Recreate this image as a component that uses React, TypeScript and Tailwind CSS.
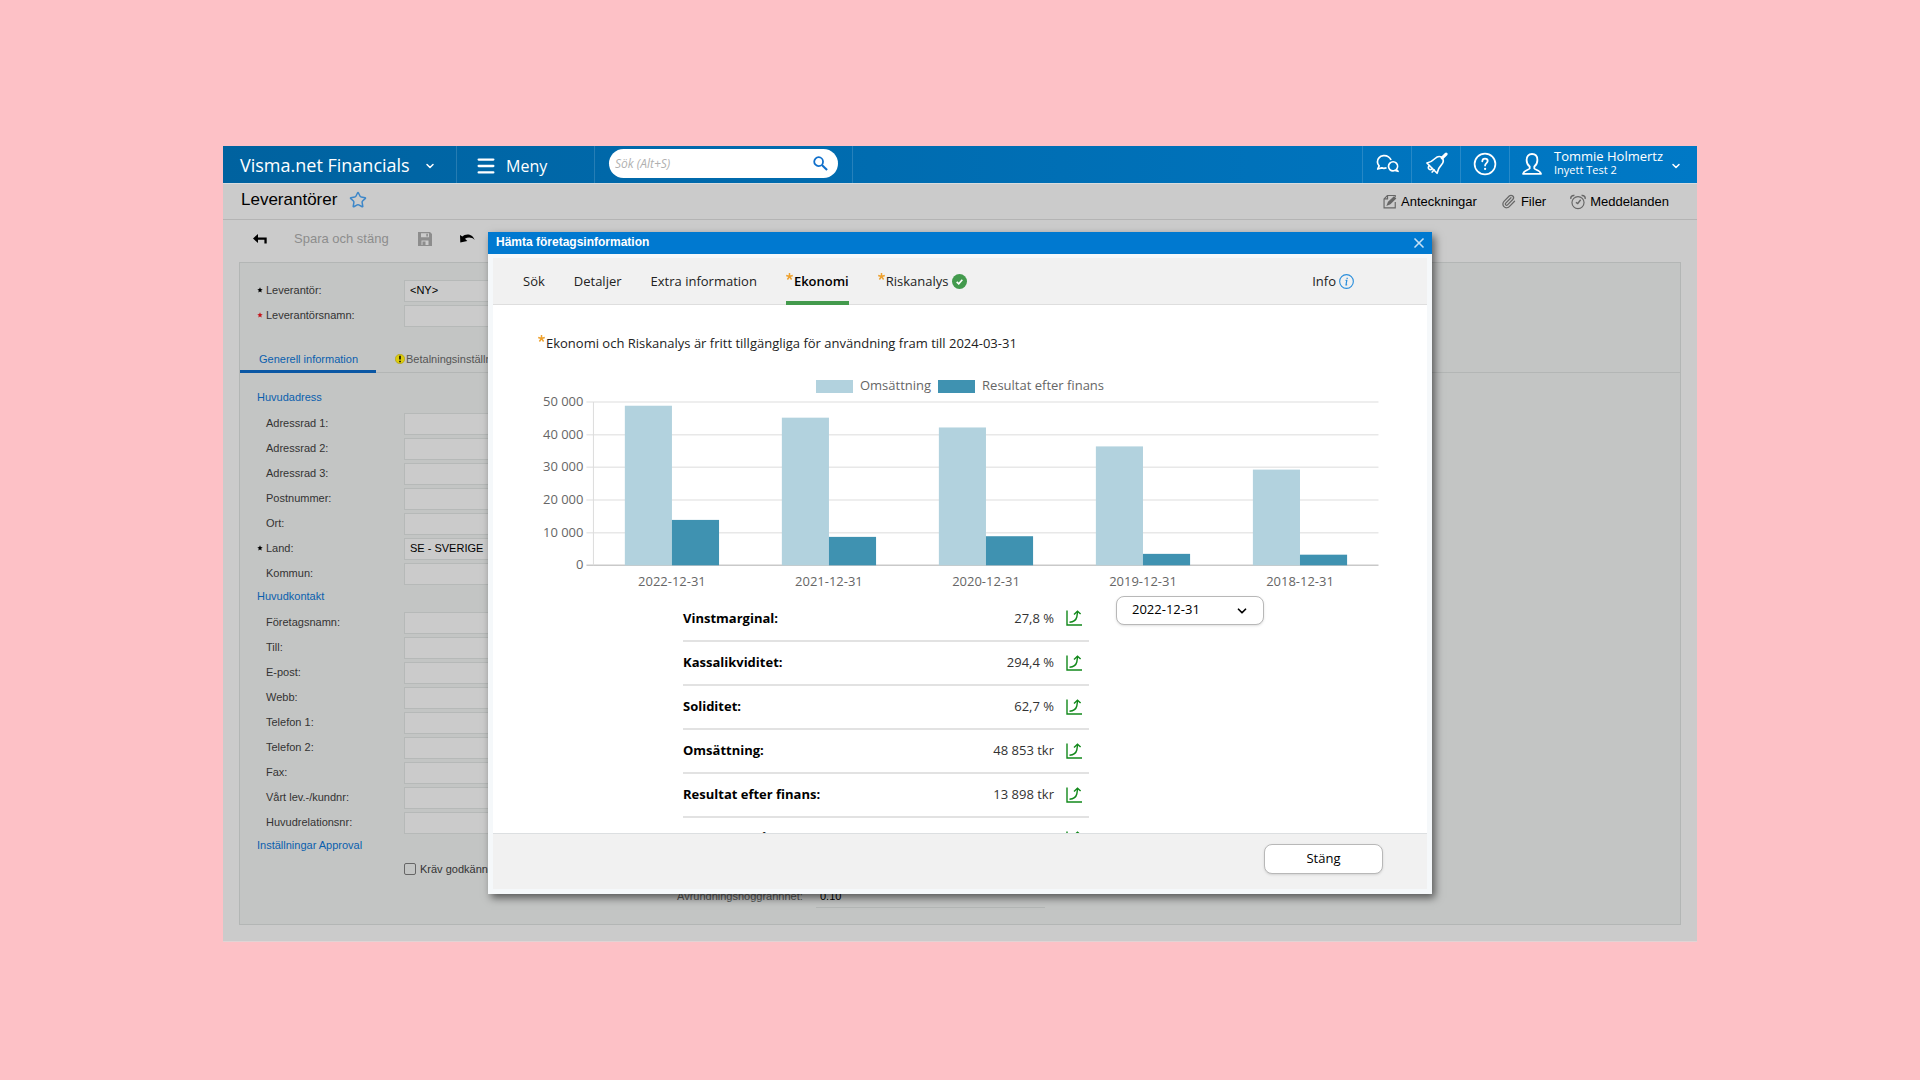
import React from 'react';
import { ChevronDown, Menu, Star, X, Paperclip } from 'lucide-react';

const CHART_DATA = [
  { date: '2022-12-31', revenue: 48853, result: 13898 },
  { date: '2021-12-31', revenue: 45200, result: 8700 },
  { date: '2020-12-31', revenue: 42200, result: 8900 },
  { date: '2019-12-31', revenue: 36400, result: 3500 },
  { date: '2018-12-31', revenue: 29300, result: 3250 },
];

const KEY_FIGURES = [
  { label: 'Vinstmarginal:', value: '27,8 %' },
  { label: 'Kassalikviditet:', value: '294,4 %' },
  { label: 'Soliditet:', value: '62,7 %' },
  { label: 'Omsättning:', value: '48 853 tkr' },
  { label: 'Resultat efter finans:', value: '13 898 tkr' },
  { label: 'Summa tillgångar:', value: '' },
];

const ADDRESS_FIELDS = [
  { id: 'adr1', label: 'Adressrad 1:' },
  { id: 'adr2', label: 'Adressrad 2:' },
  { id: 'adr3', label: 'Adressrad 3:' },
  { id: 'postnr', label: 'Postnummer:' },
  { id: 'ort', label: 'Ort:' },
  { id: 'land', label: 'Land:', value: 'SE - SVERIGE', required: 'text-black' },
  { id: 'kommun', label: 'Kommun:' },
];

const CONTACT_FIELDS = [
  { id: 'foretag', label: 'Företagsnamn:' },
  { id: 'till', label: 'Till:' },
  { id: 'epost', label: 'E-post:' },
  { id: 'webb', label: 'Webb:' },
  { id: 'tel1', label: 'Telefon 1:' },
  { id: 'tel2', label: 'Telefon 2:' },
  { id: 'fax', label: 'Fax:' },
  { id: 'levnr', label: 'Vårt lev.-/kundnr:' },
  { id: 'relnr', label: 'Huvudrelationsnr:' },
];

interface FieldProps {
  id: string;
  label: string;
  value?: string;
  required?: string;
}

const Field: React.FC<FieldProps> = ({ id, label, value = '', required }) => (
  <div className="flex h-[25px] items-start">
    <label htmlFor={id} className="flex h-5 w-[147px] items-center text-[#333]">
      <span className={`w-[9px] ${required ?? ''}`}>
        {required && (
          <svg viewBox="0 0 10 10" className="h-[6px] w-[6px] fill-current">
            <path d="M5 .5l1.300 3L9.500 4 7 6l.8 3.300L5 7.700 2.200 9.300 3 6 .5 4l3.200-.5z" />
          </svg>
        )}
      </span>
      {label}
    </label>
    <input
      id={id}
      defaultValue={value}
      className="h-[22px] w-[220px] border border-[#b6b9b8] bg-[#cbcbcb] px-[5px] pb-[2px] text-[11px] text-black outline-none"
    />
  </div>
);

const TrendIcon = () => (
  <svg viewBox="0 0 16 16" className="h-4 w-4" fill="none" stroke="#12891b" strokeWidth="1.400">
    <path d="M1 .5v14.500h15" />
    <path d="M3.500 12.300c4.300-.5 6.600-2.300 7.300-5.300.4-1.800.6-3.500.6-5.200" />
    <path d="M8 4.500l3.500-3.300L14.600 4" />
  </svg>
);

const OrangeStar = () => (
  <svg viewBox="0 0 10 10" className="mt-px h-[7px] w-[7px] shrink-0" stroke="#eea12e" strokeWidth="2.100">
    <path d="M5 5V0M5 5l4.700-1.400M5 5l3 4.300M5 5L2 9.300M5 5L.3 3.600" />
  </svg>
);

const SearchIcon = () => (
  <svg viewBox="0 0 16 16" className="h-[15px] w-[15px]" fill="none" stroke="#0f6fcb">
    <circle cx="6" cy="6" r="4.700" strokeWidth="1.900" />
    <path d="M9.500 9.500l5.500 5.500" strokeWidth="2.200" />
  </svg>
);

const ChatIcon = () => (
  <svg viewBox="0 0 24 20" className="h-[19px] w-[23px]" fill="none" stroke="currentColor" strokeWidth="1.800" strokeLinejoin="round">
    <path d="M11 14.500c-1.400.5-3.600.7-5 .1L1.700 15.800l1.500-3.300C.9 10.300.8 6.500 3 4.100 5.300 1.400 10 1 13 3c1.400.9 2.300 2 2.700 3.400" />
    <path d="M21.300 16.300c1.700-1.900 1.700-4.900 0-6.700-1.900-1.900-4.900-1.900-6.800 0-1.900 1.900-1.900 4.900 0 6.800 1.500 1.500 3.700 1.800 5.500.8l3.100 1z" />
  </svg>
);

const BellIcon = () => (
  <svg viewBox="0 0 24 24" className="h-[23px] w-[23px]" fill="none" stroke="currentColor" strokeWidth="1.700" strokeLinejoin="round" strokeLinecap="round">
    <path d="M22 2.200l-4 4" strokeWidth="3.200" />
    <path d="M17.500 5.500c-2.500-1.500-5-.7-7 1.300-2.500 2.500-5 4-8.500 4.700l10.600 10.700c.8-3.700 2-6.200 4.500-8.700 2.200-2.200 2.700-5.200.4-8z" />
    <path d="M4.500 14.200c-1.100 1.200-1.200 2.600-.4 3.500.9.900 2.400.8 3.500-.3M9.500 18.700l-2 2.200" />
  </svg>
);

const HelpIcon = () => (
  <svg viewBox="0 0 24 24" className="h-6 w-6" fill="none" stroke="currentColor" strokeWidth="1.700" strokeLinecap="round">
    <circle cx="12" cy="12" r="10.400" />
    <path d="M9.300 9.300c.1-1.700 1.200-2.600 2.700-2.600s2.700.9 2.700 2.400c0 2-2.600 2.100-2.600 4.400" strokeWidth="1.800" />
    <path d="M12.100 16.800v.2" strokeWidth="2.200" />
  </svg>
);

const UserIcon = () => (
  <svg viewBox="0 0 20 22" className="h-[22px] w-5" fill="none" stroke="currentColor" strokeWidth="1.800" strokeLinejoin="round">
    <path d="M7.700 13.500C5.800 12.200 4.600 9.800 4.600 7c0-3.600 2.100-6 5.400-6s5.400 2.400 5.400 6c0 2.800-1.200 5.200-3.100 6.500v2c.5 1.300 6 1.600 6.700 5.300H1c.7-3.700 6.200-4 6.700-5.300z" />
  </svg>
);

const NoteIcon = () => (
  <svg viewBox="0 0 16 16" className="h-[15px] w-[14px]" fill="none" stroke="#666" strokeWidth="1.300">
    <path d="M14 8.500V15.300H1.200V5L5 1.200h9V3" />
    <path d="M5.200 1.200V5H1.200" />
    <path d="M5 12l1.300-3.200L12.500 3l1.800 1.700-6.200 6z" fill="#666" />
  </svg>
);

const ClockIcon = () => (
  <svg viewBox="0 0 18 18" className="h-4 w-4" fill="none" stroke="#666" strokeWidth="1.300">
    <circle cx="9" cy="9.700" r="6.800" />
    <path d="M1.200 5.500C.3 3.500 2.500 1 5 1.700M16.800 5.500c.9-2-1.300-4.500-3.800-3.800" strokeWidth="1.700" />
    <path d="M12 6.500L8.700 10.700 6.600 9.500" strokeWidth="1.500" />
  </svg>
);

const SaveIcon = () => (
  <svg viewBox="0 0 14 14" className="h-[14px] w-[14px]">
    <path d="M0 0h12l2 2v12H0z" fill="#8d8d8d" />
    <path d="M3 1.200h8v4H3zM3.500 8.500h7V13h-7z" fill="#cbcbcb" />
    <path d="M8.300 1.800h1.600v2.600H8.300zM4.500 9.500h3V13h-3z" fill="#8d8d8d" />
  </svg>
);

const BackIcon = () => (
  <svg viewBox="0 0 14 10" className="h-[10px] w-[14px]">
    <path d="M0 4.500L5 0v3.400h8.700V9.500h-2.300V5.700H5V9z" fill="#000" />
  </svg>
);

const UndoIcon = () => (
  <svg viewBox="0 0 15 10" className="h-[10px] w-[15px]">
    <path d="M0 1l2.300 1.500C5.500-.7 12.500-.6 14.700 6 12 3.200 8 2.900 5 4.800L7.300 7 .3 8.400z" fill="#000" />
  </svg>
);

// Chart geometry, in the units of the viewBox
const PLOT_LEFT = 55.5;
const PLOT_RIGHT = 841.5;
const PLOT_TOP = 6;
const PLOT_BOTTOM = 169.5;
const SLOT = (PLOT_RIGHT - PLOT_LEFT) / CHART_DATA.length;
const BAR = SLOT * 0.3;

const BarChart = () => {
  const y = (v: number) => PLOT_BOTTOM - (v / 50000) * (PLOT_BOTTOM - PLOT_TOP);
  return (
    <svg viewBox="0 0 842 195" className="block w-full overflow-visible text-[13px]" fill="#666" role="img" aria-label="Omsättning och resultat">
      {[0, 10000, 20000, 30000, 40000, 50000].map((v) => (
        <g key={v}>
          <line x1={PLOT_LEFT - 7} x2={PLOT_RIGHT} y1={y(v)} y2={y(v)} stroke={v === 0 ? '#c9c9c9' : '#e8e8e8'} strokeWidth="1.500" />
          <text x={PLOT_LEFT - 10} y={y(v) + 4} textAnchor="end">
            {v === 0 ? '0' : `${v / 1000} 000`}
          </text>
        </g>
      ))}
      <line x1={PLOT_LEFT} x2={PLOT_LEFT} y1={PLOT_TOP} y2={PLOT_BOTTOM} stroke="#dcdcdc" />
      {CHART_DATA.map((d, i) => {
        const x = PLOT_LEFT + i * SLOT + SLOT * 0.2;
        return (
          <g key={d.date}>
            <rect x={x} y={y(d.revenue)} width={BAR} height={PLOT_BOTTOM - y(d.revenue)} fill="#b2d2de" />
            <rect x={x + BAR} y={y(d.result)} width={BAR} height={PLOT_BOTTOM - y(d.result)} fill="#3f92b1" />
            <text x={x + BAR} y={190} textAnchor="middle">
              {d.date}
            </text>
          </g>
        );
      })}
    </svg>
  );
};

const TopBar = () => (
  <header className="flex h-[38px] border-b border-[#d9dcde] bg-linear-to-r from-[#00629f] to-[#0079c6] font-['Open_Sans',sans-serif] text-white">
    <button className="flex w-[234px] items-center border-r border-white/15 pl-[17px] text-lg whitespace-nowrap">
      Visma.net Financials
      <ChevronDown className="mt-[2px] ml-[14px] h-3 w-3" strokeWidth={3} />
    </button>
    <button className="flex w-[138px] items-center gap-[9px] border-r border-white/15 pt-[2px] pl-[18px] text-base">
      <Menu className="h-[22px] w-[22px]" strokeWidth={2.5} />
      Meny
    </button>
    <div className="flex w-[258px] items-start border-r border-white/15 pt-[3px] pl-[14px]">
      <div className="flex h-[29px] w-[229px] items-center rounded-full bg-white pr-[10px] pl-[6px]">
        <input
          type="text"
          aria-label="Sök"
          placeholder="Sök (Alt+S)"
          className="min-w-0 flex-1 text-xs text-black italic outline-none placeholder:text-[#b0b0b0]"
        />
        <SearchIcon />
      </div>
    </div>
    <div className="ml-auto flex">
      <button aria-label="Chatt" className="flex w-[49px] items-center justify-center border-l border-white/15 pb-[2px]">
        <ChatIcon />
      </button>
      <button aria-label="Aviseringar" className="flex w-[49px] items-center justify-center border-l border-white/15 pb-[2px]">
        <BellIcon />
      </button>
      <button aria-label="Hjälp" className="flex w-[49px] items-center justify-center border-l border-white/15 pb-[2px]">
        <HelpIcon />
      </button>
      <button className="flex w-[188px] items-center border-l border-white/15 pb-[2px] pl-3 text-left">
        <UserIcon />
        <span className="ml-3 flex flex-1 flex-col pb-[2px] whitespace-nowrap">
          <span className="text-[13px] leading-[14px]">Tommie Holmertz</span>
          <span className="text-[11px] leading-[14px]">Inyett Test 2</span>
        </span>
        <ChevronDown className="mt-[5px] mr-[15px] h-3 w-3" strokeWidth={3} />
      </button>
    </div>
  </header>
);

const TitleBar = () => (
  <div className="flex h-9 items-center border-b border-[#b4b4b4] pr-7 pl-[18px] text-black">
    <h1 className="pb-1 text-[17px] leading-5">Leverantörer</h1>
    <button aria-label="Favorit" className="ml-3 pb-1">
      <Star className="h-[18px] w-[18px] text-[#3d87c9]" strokeWidth={2} />
    </button>
    <div className="ml-auto flex gap-6 text-[13px]">
      <button className="flex items-center gap-1">
        <NoteIcon />
        Anteckningar
      </button>
      <button className="flex items-center gap-[5px]">
        <Paperclip className="h-[15px] w-[15px] text-[#666]" />
        Filer
      </button>
      <button className="flex items-center gap-1">
        <ClockIcon />
        Meddelanden
      </button>
    </div>
  </div>
);

const SupplierForm = () => (
  <div className="mx-4 border border-[#b3b6b5] bg-[#c3c5c4] pt-[17px] pb-4 text-[11px]">
    <div className="pl-[17px]">
      <Field id="lev" label="Leverantör:" value="<NY>" required="text-black" />
      <Field id="levnamn" label="Leverantörsnamn:" required="text-[#c4161c]" />
    </div>
    <div className="mt-4 flex h-[27px] border-b border-[#b3b6b5]">
      <button className="h-[27px] w-[136px] border-b-[3px] border-[#0a57a4] pt-[2px] pl-px text-[#0a5fae]">Generell information</button>
      <button className="ml-[19px] flex h-[27px] items-center gap-px pb-px text-[#555]">
        <svg viewBox="0 0 10 10" className="h-[10px] w-[10px]">
          <circle cx="5" cy="5" r="4.700" fill="#dccb0c" stroke="#a89b14" strokeWidth=".6" />
          <path d="M5 1.800v3.700M5 6.800v1.400" stroke="#000" strokeWidth="1.500" />
        </svg>
        Betalningsinställningar
      </button>
    </div>
    <div className="flex pl-[17px]">
      <div className="pt-4 pb-[31px]">
        <h2 className="h-6 leading-4 text-[#0a5fae]">Huvudadress</h2>
        {ADDRESS_FIELDS.map((f) => (
          <Field key={f.id} {...f} />
        ))}
        <h2 className="h-6 leading-4 text-[#0a5fae]">Huvudkontakt</h2>
        {CONTACT_FIELDS.map((f) => (
          <Field key={f.id} {...f} />
        ))}
        <h2 className="h-6 leading-4 text-[#0a5fae]">Inställningar Approval</h2>
        <label className="ml-[147px] flex h-4 items-center gap-1 text-[#333]">
          <input type="checkbox" className="h-[12px] w-[12px] appearance-none rounded-xs border border-[#666]" />
          Kräv godkännande
        </label>
      </div>
      <div className="ml-[53px] flex items-center self-end">
        <label htmlFor="avr" className="w-[139px] text-[#555]">
          Avrundningsnoggrannhet:
        </label>
        <input id="avr" defaultValue="0.10" className="h-[23px] w-[229px] border-b border-[#b3b6b5] px-1 text-black outline-none" />
      </div>
    </div>
  </div>
);

const CompanyDialog = () => (
  <div
    role="dialog"
    aria-label="Hämta företagsinformation"
    className="absolute inset-x-0 top-[86px] mx-auto flex h-[662px] w-[944px] flex-col bg-[#f5f8fa] font-['Open_Sans',sans-serif] text-[13px] text-[#222] shadow-[3px_4px_8px_rgba(0,0,0,0.55)]"
  >
    <div className="flex h-[22px] items-center justify-between bg-[#0079d0] pr-[5px] pl-2 text-white">
      <h2 className="pb-[2px] font-['Liberation_Sans',sans-serif] text-xs font-bold">Hämta företagsinformation</h2>
      <button aria-label="Stäng dialog">
        <X className="h-4 w-4 text-[#c5e0f5]" strokeWidth={2.5} />
      </button>
    </div>
    <div className="mx-[5px] mt-1 mb-[5px] flex min-h-0 flex-1 flex-col">
      <nav className="flex h-[47px] shrink-0 gap-[29px] border-b border-[#dedede] bg-[#f1f1f1] pr-[73px] pl-[30px]">
        <button className="pt-px">Sök</button>
        <button className="pt-px">Detaljer</button>
        <button className="pt-px">Extra information</button>
        <button className="flex h-[47px] border-b-4 border-[#439a4d] pt-[14px] font-semibold text-black">
          <OrangeStar />
          <span className="pl-px">Ekonomi</span>
        </button>
        <button className="flex h-[47px] pt-[14px]">
          <OrangeStar />
          <span className="pl-px">Riskanalys</span>
          <svg viewBox="0 0 16 16" className="mt-[2px] ml-1 h-[15px] w-[15px]">
            <circle cx="8" cy="8" r="8" fill="#439a4d" />
            <path d="M5 8.300l2.200 2.200L11 6.200" fill="none" stroke="#fff" strokeWidth="1.800" />
          </svg>
        </button>
        <button className="ml-auto flex items-center gap-[3px] pt-px">
          Info
          <svg viewBox="0 0 16 16" className="h-[15px] w-[15px]" fill="none" stroke="#2b8fdc">
            <circle cx="8" cy="8" r="7.300" strokeWidth="1.200" />
            <path d="M7 6.700h1.300L7.500 11.500h1.200M8.700 3.900v1.300" strokeWidth="1.300" />
          </svg>
        </button>
      </nav>

      <div className="min-h-0 flex-1 overflow-hidden bg-white pt-[29px] pr-12 pl-[45px]">
        <p className="flex h-5">
          <OrangeStar />
          <span className="pl-px">Ekonomi och Riskanalys är fritt tillgängliga för användning fram till 2024-03-31</span>
        </p>
        <div className="mt-[22px] flex h-5 items-center justify-center gap-[7px] pl-[3px] text-[#666]">
          <span className="h-[13px] w-[37px] bg-[#b2d2de]" />
          Omsättning
          <span className="h-[13px] w-[37px] bg-[#3f92b1]" />
          Resultat efter finans
        </div>
        <BarChart />
        <div className="mt-[5px] flex items-start pl-[145px]">
          <table className="mt-px w-[406px] border-collapse">
            <tbody>
              {KEY_FIGURES.map((row) => (
                <tr key={row.label} className="h-11 border-b-2 border-[#e2e2e2]">
                  <th scope="row" className="p-0 text-left font-bold text-black">
                    {row.label}
                  </th>
                  <td className="p-0 text-right text-[#333]">{row.value}</td>
                  <td className="w-[35px] p-0 pl-3">
                    <TrendIcon />
                  </td>
                </tr>
              ))}
            </tbody>
          </table>
          <div className="relative ml-[27px]">
            <select
              aria-label="Bokslut"
              defaultValue="2022-12-31"
              className="h-[29px] w-[148px] appearance-none rounded-lg border border-[#b8b8b8] bg-white px-[15px] pb-px text-black shadow-sm outline-none"
            >
              {CHART_DATA.map((d) => (
                <option key={d.date}>{d.date}</option>
              ))}
            </select>
            <ChevronDown className="pointer-events-none absolute top-2 right-[15px] h-[14px] w-[14px] text-black" strokeWidth={3} />
          </div>
        </div>
      </div>

      <div className="flex h-[56px] shrink-0 items-start justify-end border-t border-[#dcdfe1] bg-[#f1f1f1] pt-[10px] pr-11">
        <button className="h-[30px] w-[119px] rounded-lg border border-[#b8b8b8] bg-white text-black shadow-sm">Stäng</button>
      </div>
    </div>
  </div>
);

export default function App() {
  return (
    <div className="min-h-screen bg-[#fdc1c6] px-[223px] py-[146px] font-['Liberation_Sans',sans-serif]">
      <main className="relative border-b border-[#e2d3d4] bg-[#cbcbcb] pb-4">
        <TopBar />
        <TitleBar />
        <div className="flex h-[42px] items-center pb-1 pl-[30px] text-[13px] text-[#8d8d8d]">
          <button aria-label="Tillbaka">
            <BackIcon />
          </button>
          <button className="ml-[27px]">Spara och stäng</button>
          <button aria-label="Spara" className="ml-[29px]">
            <SaveIcon />
          </button>
          <button aria-label="Ångra" className="ml-7">
            <UndoIcon />
          </button>
        </div>
        <SupplierForm />
        <CompanyDialog />
      </main>
    </div>
  );
}
